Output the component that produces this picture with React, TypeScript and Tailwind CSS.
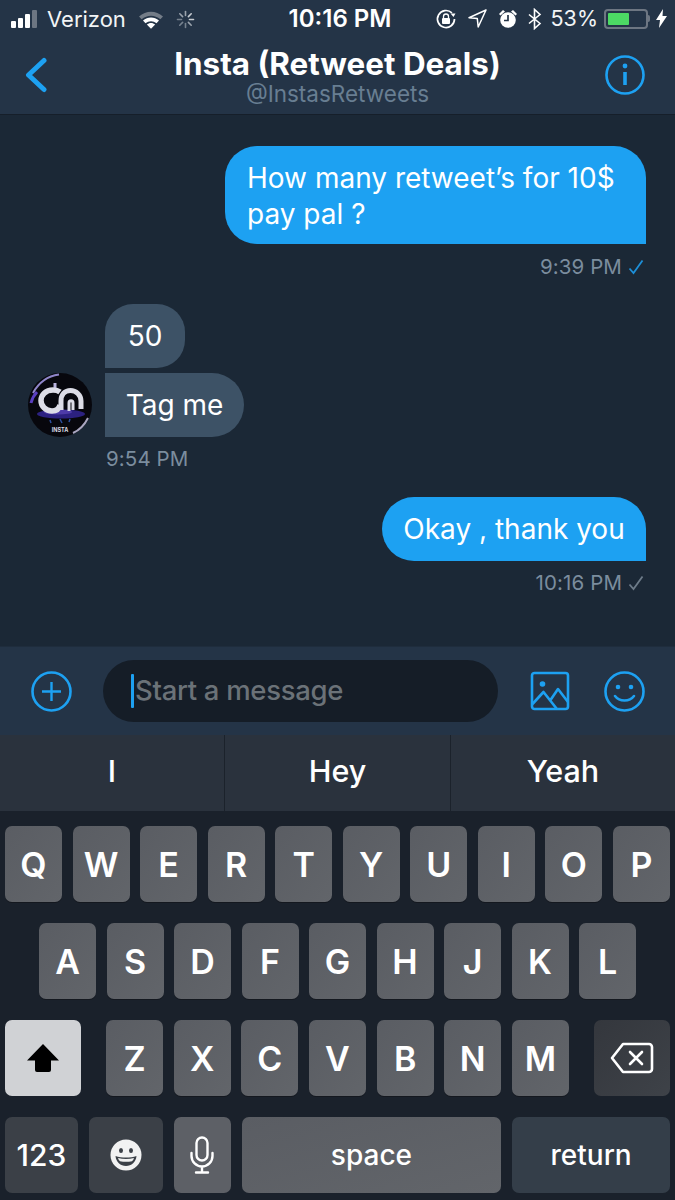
const font = { fontFamily: "Inter, 'Liberation Sans', sans-serif" };

function Key({ label, wide = "w-[57px]" }: { label: string; wide?: string }) {
  return (
    <div className={`${wide} h-[76px] rounded-[7px] bg-gradient-to-br from-[#5a5d63] to-[#62656a] shadow-[0_1px_0_#14181f] flex items-center justify-center text-white text-[34px] font-semibold`}>
      {label}
    </div>
  );
}

function StatusBar() {
  return (
    <div className="h-[37px] grid grid-cols-3 items-center text-white">
      <div className="flex items-center pl-[11px] pt-[1px]">
        <div className="flex items-end gap-[2px] h-[18px]">
          <span className="w-[5px] h-[7px] rounded-[1px] bg-white" />
          <span className="w-[5px] h-[10px] rounded-[1px] bg-white" />
          <span className="w-[5px] h-[14px] rounded-[1px] bg-white" />
          <span className="w-[5px] h-[18px] rounded-[1px] bg-[#6d7682]" />
        </div>
        <span className="ml-[10px] text-[22px] leading-none text-[#f2f4f6]">Verizon</span>
        <svg className="ml-[12px]" width="26" height="19" viewBox="0 0 26 19">
          <path d="M1 6.500C8 0 18 0 25 6.500l-2.600 2.800C16.800 4.600 9.200 4.600 3.600 9.300z" fill="#737c87" />
          <path d="M5 10.600c4.700-4.200 11.300-4.200 16 0l-2.500 2.700c-3.300-2.800-7.700-2.800-11 0z" fill="#fff" />
          <path d="M8.800 14.500c2.500-2.100 5.900-2.100 8.400 0L13 18.800z" fill="#fff" />
        </svg>
        <svg className="ml-[12px]" width="19" height="19" viewBox="0 0 19 19" stroke="#9aa3ad" strokeWidth="1.600" strokeLinecap="round">
          <path d="M9.500 1.500v4" />
          <path d="M15.200 3.800l-2.800 2.800" stroke="#c5cad0" />
          <path d="M17.500 9.500h-4" stroke="#c5cad0" />
          <path d="M15.200 15.200l-2.800-2.800" />
          <path d="M9.500 17.500v-4" opacity=".7" />
          <path d="M3.800 15.200l2.800-2.800" opacity=".7" />
          <path d="M1.500 9.500h4" opacity=".7" />
          <path d="M3.800 3.800l2.800 2.800" />
        </svg>
      </div>
      <div className="text-center text-[24px] font-semibold leading-none whitespace-nowrap pl-[5px]">10:16 PM</div>
      <div className="flex items-center justify-end pr-[8px] -ml-[20px]">
        <svg width="22" height="22" viewBox="0 0 22 22" fill="none" stroke="#fff" strokeWidth="1.700">
          <path d="M19.500 11a8.500 8.500 0 1 1-2.600-6.100" />
          <path d="M15.500 5.500h5L18.500 9z" fill="#fff" stroke="none" />
          <rect x="7" y="10" width="8" height="6" rx="1" fill="#fff" stroke="none" />
          <path d="M8.500 10V8.500a2.500 2.500 0 0 1 5 0V10" strokeWidth="1.300" />
        </svg>
        <svg className="ml-[11px]" width="19" height="19" viewBox="0 0 19 19" fill="none" stroke="#fff" strokeWidth="1.500" strokeLinejoin="round">
          <path d="M18 1L1 8.800l8.300.8.900 8.400z" />
        </svg>
        <svg className="ml-[11px]" width="20" height="20" viewBox="0 0 20 20">
          <circle cx="10" cy="11" r="7.800" fill="#fff" />
          <path d="M10 6v5.500H6" fill="none" stroke="#243447" strokeWidth="1.700" />
          <path d="M1 5l4-4 2 1.500-4.500 4zM19 5l-4-4-2 1.500 4.500 4z" fill="#fff" />
        </svg>
        <svg className="ml-[10px]" width="14" height="22" viewBox="0 0 14 22" fill="none" stroke="#fff" strokeWidth="1.600">
          <path d="M1 6.500l11 9-5.500 5V1.500l5.500 5-11 9" />
        </svg>
        <span className="ml-[9px] text-[21.500px] leading-none text-[#f2f4f6]">53%</span>
        <div className="ml-[6px] w-[44px] h-[20px] rounded-[4px] border-2 border-[#6d7682] p-[2px]">
          <div className="w-[21px] h-full rounded-[1px] bg-[#4cd964]" />
        </div>
        <div className="w-[2px] h-[7px] bg-[#6d7682] rounded-r-[2px] mr-[6px]" />
        <svg width="11" height="19" viewBox="0 0 11 19">
          <path d="M7 0L0 11h4l-1 8 8-12H6.500z" fill="#fff" />
        </svg>
      </div>
    </div>
  );
}

function NavBar() {
  return (
    <div className="h-[78px] border-b border-[#161f2a] grid grid-cols-[1fr_auto_1fr] items-start">
      <div className="pl-[25px] pt-[20px]">
        <svg width="23" height="36" viewBox="0 0 23 36" fill="none" stroke="#1da1f2" strokeWidth="5" strokeLinecap="round" strokeLinejoin="round">
          <path d="M19 3.500L3.500 18 19 32.500" />
        </svg>
      </div>
      <div className="text-center pt-[9px]">
        <div className="text-[31.400px] leading-[36px] font-bold text-white whitespace-nowrap">Insta (Retweet Deals)</div>
        <div className="text-[22.500px] leading-[24px] text-[#687e92]">@InstasRetweets</div>
      </div>
      <div className="flex justify-end pr-[30px] pt-[18px]">
        <svg width="40" height="40" viewBox="0 0 40 40" fill="none" stroke="#1da1f2" strokeWidth="2.600">
          <circle cx="20" cy="20" r="18.500" />
          <path d="M20 17v13" strokeWidth="3.600" />
          <circle cx="20" cy="11" r="2.400" fill="#1da1f2" stroke="none" />
        </svg>
      </div>
    </div>
  );
}

function Check({ color }: { color: string }) {
  return (
    <svg className="ml-[6px] mr-[2px]" width="16" height="16" viewBox="0 0 16 16" fill="none" stroke={color} strokeWidth="1.800">
      <path d="M1.500 9.500L5.500 14 14.500 1.500" />
    </svg>
  );
}

function Avatar() {
  return (
    <svg width="64" height="64" viewBox="0 0 64 64" className="shrink-0">
      <circle cx="32" cy="32" r="32" fill="#07070d" />
      {/* rim light */}
      <path d="M5 20C11 9 20 3 31 1.500" fill="none" stroke="#8f86c9" strokeWidth="2" />
      <path d="M3 30c1-4 3-8 6-11" fill="none" stroke="#5a3fc0" strokeWidth="3" />
      <path d="M45 60c7-3 12-9 15-15" fill="none" stroke="#a9a6c0" strokeWidth="2" />
      {/* glow under the logo */}
      <ellipse cx="33" cy="41" rx="24" ry="4.500" fill="#2c2180" />
      <ellipse cx="30" cy="39" rx="14" ry="2.500" fill="#4d3ba8" />
      <path d="M32 46l2 4M22 47l1 3M42 46l-1 3" stroke="#2c4fa0" strokeWidth="1.500" />
      {/* logo */}
      <path d="M27 10v9" stroke="#b9b2dc" strokeWidth="3" />
      <path d="M32 19c-2-1.500-4.500-2-7-2-7.500 0-12 5-12 10.500S17.500 38 24 38c4 0 7-2 8-6" fill="none" stroke="#dcdce6" strokeWidth="5.500" />
      <path d="M33 37V28c0-6.500 4-10.500 9.500-10.500S53 22 53 28v8" fill="none" stroke="#dcdce6" strokeWidth="5" />
      <path d="M41 38v-8c0-3 4-3 4 0v7" fill="none" stroke="#dcdce6" strokeWidth="3" />
      <text x="32" y="58.500" textAnchor="middle" fontSize="5.500" fontWeight="700" fill="#d8d8e0" fontFamily="Inter, sans-serif">INSTA</text>
    </svg>
  );
}

function Thread() {
  return (
    <div className="h-[531px] bg-[#1b2836] pt-[31px]">
      <div className="flex flex-col items-end pr-[29px]">
        <div className="w-[421px] h-[98px] bg-[#1da1f2] rounded-[32px] rounded-br-none pl-[22px] pt-[14px] text-[28px] leading-[36px] text-white">
          How many retweet’s for 10$
          <br />
          pay pal ?
        </div>
        <div className="mt-[11px] flex items-center text-[20.500px] leading-[24px] tracking-[0.1px] text-[#7b8d9e]">
          9:39 PM
          <Check color="#1d8fd8" />
        </div>
      </div>

      <div className="mt-[25px] pl-[28px] flex items-end gap-[13px]">
        <Avatar />
        <div className="flex flex-col items-start gap-[5px]">
          <div className="w-[80px] h-[64px] bg-[#3d5266] rounded-[28px] rounded-bl-none flex items-center justify-center text-[28px] text-white">
            50
          </div>
          <div className="w-[139px] h-[64px] bg-[#3d5266] rounded-r-[32px] flex items-center justify-center text-[28px] text-white">
            Tag me
          </div>
        </div>
      </div>
      <div className="mt-[10px] ml-[106px] text-[20.500px] leading-[24px] tracking-[0.1px] text-[#7b8d9e]">9:54 PM</div>

      <div className="mt-[26px] flex flex-col items-end pr-[29px]">
        <div className="w-[264px] h-[64px] bg-[#1da1f2] rounded-[32px] rounded-br-none flex items-center justify-center text-[28px] text-white whitespace-nowrap">
          Okay , thank you
        </div>
        <div className="mt-[10px] flex items-center text-[20.500px] leading-[24px] tracking-[0.1px] text-[#7b8d9e]">
          10:16 PM
          <Check color="#6d7b89" />
        </div>
      </div>
    </div>
  );
}

function Composer() {
  return (
    <div className="h-[89px] bg-[#243447] border-t border-[#1f2d3d] flex items-center pl-[31px]">
      <svg width="41" height="41" viewBox="0 0 41 41" fill="none" stroke="#1da1f2" strokeWidth="2.600" className="shrink-0">
        <circle cx="20.500" cy="20.500" r="19" />
        <path d="M20.500 11v19M11 20.500h19" strokeWidth="2.400" />
      </svg>
      <div className="ml-[31px] w-[395px] h-[62px] shrink-0 rounded-full bg-[#151d27] flex items-center pl-[28px]">
        <span className="w-[3px] h-[34px] bg-[#1da1f2] rounded-[1px]" />
        <span className="ml-[1px] text-[27.500px] font-medium tracking-[-0.3px] text-[#6b7278] whitespace-nowrap">Start a message</span>
      </div>
      <svg className="ml-[32px] shrink-0" width="40" height="40" viewBox="0 0 40 40" fill="none" stroke="#1da1f2" strokeWidth="2.600" strokeLinejoin="round">
        <rect x="2" y="2" width="36" height="36" rx="2.500" />
        <circle cx="12.500" cy="13" r="2.800" fill="#1da1f2" stroke="none" />
        <path d="M2.500 33l11-12 13 16.500M20.500 29l7.500-11 10 13" />
      </svg>
      <svg className="ml-[34px] shrink-0" width="41" height="41" viewBox="0 0 41 41" fill="none" stroke="#1da1f2" strokeWidth="2.600" strokeLinecap="round">
        <circle cx="20.500" cy="20.500" r="19" />
        <circle cx="14" cy="16" r="2.300" fill="#1da1f2" stroke="none" />
        <circle cx="27" cy="16" r="2.300" fill="#1da1f2" stroke="none" />
        <path d="M11 25c4.500 6 14.500 6 19 0" />
      </svg>
    </div>
  );
}

function Suggestions() {
  return (
    <div className="h-[76px] bg-[#2a323d] grid grid-cols-[224px_1px_225px_1px_1fr] items-stretch text-[30.500px] font-medium text-white">
      <div className="flex items-center justify-center pb-[5px]">I</div>
      <div className="bg-[#1b222b]" />
      <div className="flex items-center justify-center pb-[5px]">Hey</div>
      <div className="bg-[#1b222b]" />
      <div className="flex items-center justify-center pb-[5px]">Yeah</div>
    </div>
  );
}

function Keyboard() {
  return (
    <div className="h-[389px] bg-[#1a212b] pt-[15px] px-[5px] flex flex-col gap-[21px]">
      <div className="flex justify-between">
        {"QWERTYUIOP".split("").map((k) => (
          <Key key={k} label={k} />
        ))}
      </div>
      <div className="flex justify-between px-[34px]">
        {"ASDFGHJKL".split("").map((k) => (
          <Key key={k} label={k} />
        ))}
      </div>
      <div className="flex justify-between">
        <div className="w-[76px] h-[76px] rounded-[7px] bg-[#d0d2d5] flex items-center justify-center">
          <svg width="34" height="30" viewBox="0 0 34 30">
            <path d="M17 1L33 17.500H25V27a2 2 0 0 1-2 2H11a2 2 0 0 1-2-2V17.500H1z" fill="#000" />
          </svg>
        </div>
        <div className="w-[463px] flex justify-between">
          {"ZXCVBNM".split("").map((k) => (
            <Key key={k} label={k} />
          ))}
        </div>
        <div className="w-[76px] h-[76px] rounded-[7px] bg-gradient-to-br from-[#34373d] to-[#3e4248] flex items-center justify-center">
          <svg width="44" height="32" viewBox="0 0 44 32" fill="none" stroke="#fff" strokeWidth="2.600" strokeLinejoin="round" strokeLinecap="round">
            <path d="M13 2h26a3 3 0 0 1 3 3v22a3 3 0 0 1-3 3H13L2 16z" />
            <path d="M20 10l12 12M32 10L20 22" />
          </svg>
        </div>
      </div>
      <div className="flex gap-[11px]">
        <div className="w-[73px] h-[76px] rounded-[7px] bg-[#3b4047] flex items-center justify-center text-[30px] font-medium text-white">123</div>
        <div className="w-[74px] h-[76px] rounded-[7px] bg-[#3b4047] flex items-center justify-center">
          <svg width="32" height="32" viewBox="0 0 32 32">
            <circle cx="16" cy="16" r="15.500" fill="#f2f2f2" />
            <ellipse cx="11" cy="11.500" rx="2" ry="2.600" fill="#3b4047" />
            <ellipse cx="21" cy="11.500" rx="2" ry="2.600" fill="#3b4047" />
            <path d="M5.500 17c6 2 15 2 21 0-.500 6-5 10-10.500 10S6 23 5.500 17z" fill="#3b4047" />
            <path d="M8 19c5 1.200 11 1.200 16 0-.500 1.600-1 2.400-2 3.200-4 .800-8 .800-12 0-1-.800-1.500-1.600-2-3.200z" fill="#f2f2f2" />
          </svg>
        </div>
        <div className="w-[57px] h-[76px] rounded-[7px] bg-[#5d6066] flex items-center justify-center">
          <svg width="24" height="38" viewBox="0 0 24 38" fill="none" stroke="#fff" strokeWidth="2.400" strokeLinecap="round">
            <rect x="6.500" y="1.500" width="11" height="23" rx="5.500" />
            <path d="M1.500 17v3a10.500 10.500 0 0 0 21 0v-3M12 30.500V36M6 36.500h12" />
          </svg>
        </div>
        <div className="w-[260px] h-[76px] rounded-[7px] bg-gradient-to-br from-[#5a5d63] to-[#62656a] flex items-center justify-center text-[28px] font-medium text-white">space</div>
        <div className="w-[158px] h-[76px] rounded-[7px] bg-[#343e49] flex items-center justify-center text-[28px] font-medium text-white">return</div>
      </div>
    </div>
  );
}

export default function App() {
  return (
    <div className="w-[675px] h-[1200px] overflow-hidden flex flex-col" style={font}>
      <div className="bg-[#243447]">
        <StatusBar />
        <NavBar />
      </div>
      <Thread />
      <Composer />
      <Suggestions />
      <Keyboard />
    </div>
  );
}
